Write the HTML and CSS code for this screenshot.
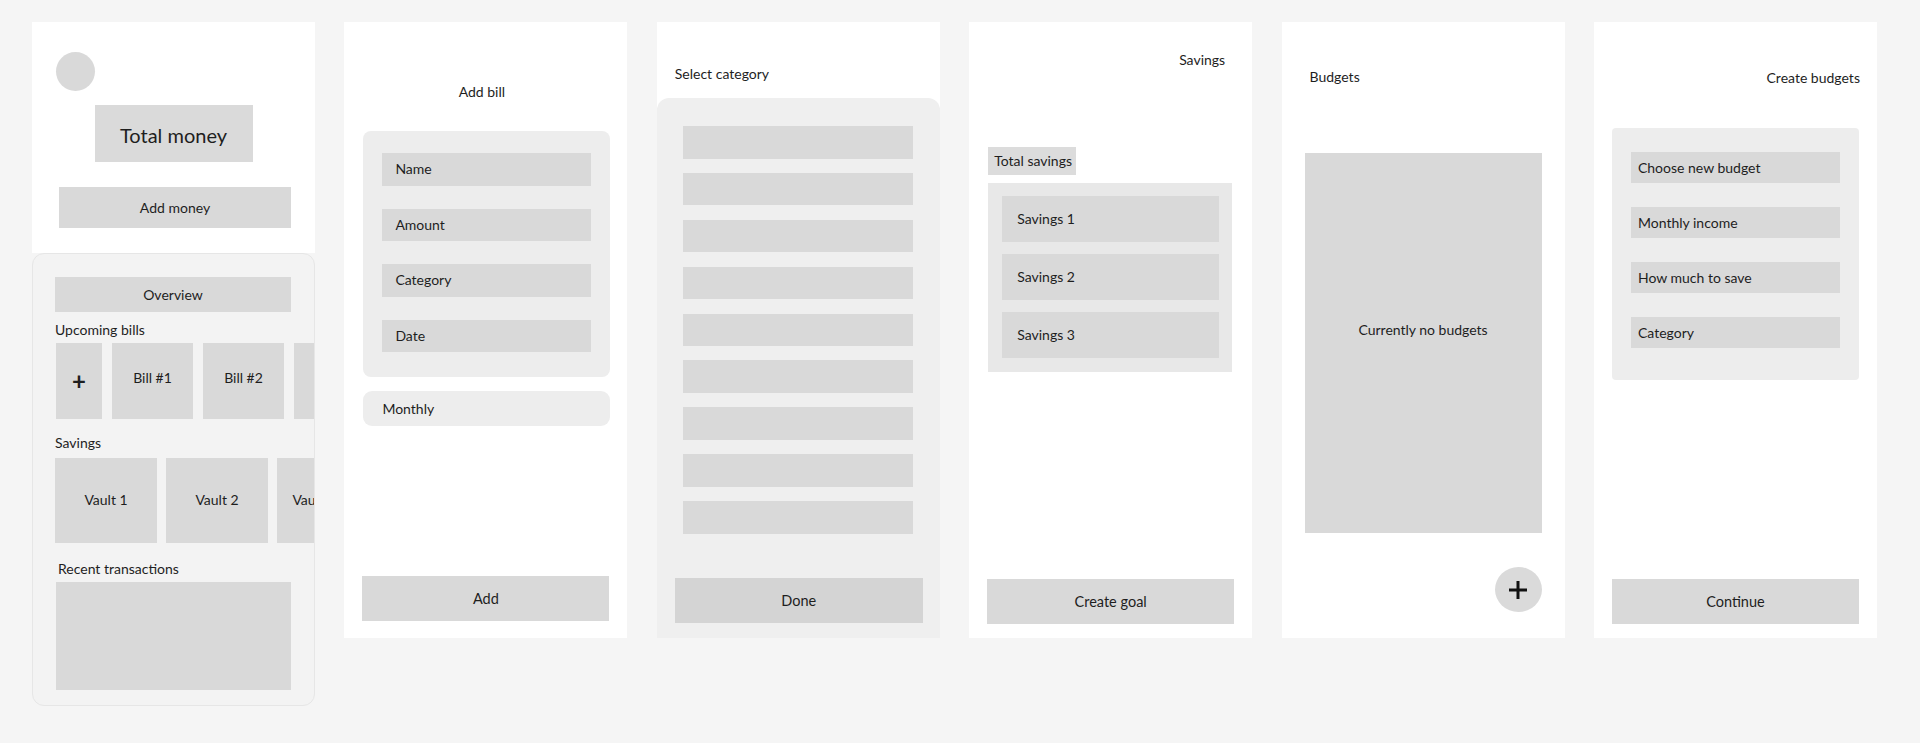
FILE: index.html
```html
<!DOCTYPE html>
<html lang="en">
<head>
<meta charset="utf-8">
<title>Finance app wireframes</title>
<link rel="stylesheet" href="styles.css">
</head>
<body>
<main class="board">

  <!-- Screen 1: Home -->
  <section class="screen home">
    <div class="home-top">
      <div class="avatar"></div>
      <div class="total-money">Total money</div>
      <div class="btn add-money">Add money</div>
    </div>
    <div class="home-sheet">
      <div class="overview">Overview</div>
      <div class="label bills-label">Upcoming bills</div>
      <div class="card-row bills">
        <div class="card bill-add">+</div>
        <div class="card bill">Bill #1</div>
        <div class="card bill">Bill #2</div>
        <div class="card bill"></div>
      </div>
      <div class="label savings-label">Savings</div>
      <div class="card-row vaults">
        <div class="card vault">Vault 1</div>
        <div class="card vault">Vault 2</div>
        <div class="card vault vault-partial">Vault 3</div>
      </div>
      <div class="label recent-label">Recent transactions</div>
      <div class="recent-box"></div>
    </div>
  </section>

  <!-- Screen 2: Add bill -->
  <section class="screen add-bill">
    <div class="title center">Add bill</div>
    <div class="form-box bill-form">
      <div class="field">Name</div>
      <div class="field">Amount</div>
      <div class="field">Category</div>
      <div class="field">Date</div>
    </div>
    <div class="monthly">Monthly</div>
    <div class="btn bottom-btn add-btn">Add</div>
  </section>

  <!-- Screen 3: Select category -->
  <section class="screen select-cat">
    <div class="title cat-title">Select category</div>
    <div class="cat-sheet">
      <div class="cat-list">
        <div class="cat-row"></div>
        <div class="cat-row"></div>
        <div class="cat-row"></div>
        <div class="cat-row"></div>
        <div class="cat-row"></div>
        <div class="cat-row"></div>
        <div class="cat-row"></div>
        <div class="cat-row"></div>
        <div class="cat-row"></div>
      </div>
      <div class="btn done-btn">Done</div>
    </div>
  </section>

  <!-- Screen 4: Savings -->
  <section class="screen savings">
    <div class="title right savings-title">Savings</div>
    <div class="chip">Total savings</div>
    <div class="savings-list">
      <div class="saving-item">Savings 1</div>
      <div class="saving-item">Savings 2</div>
      <div class="saving-item">Savings 3</div>
    </div>
    <div class="btn bottom-btn">Create goal</div>
  </section>

  <!-- Screen 5: Budgets -->
  <section class="screen budgets">
    <div class="title budgets-title">Budgets</div>
    <div class="empty-box">Currently no budgets</div>
    <div class="fab-row">
      <div class="fab">
        <svg width="22" height="22" viewBox="0 0 22 22" aria-hidden="true">
          <path d="M11 2V20M2 11H20" stroke="#111" stroke-width="3" fill="none"/>
        </svg>
      </div>
    </div>
  </section>

  <!-- Screen 6: Create budgets -->
  <section class="screen create-budgets">
    <div class="title right create-title">Create budgets</div>
    <div class="form-box budget-form">
      <div class="field">Choose new budget</div>
      <div class="field">Monthly income</div>
      <div class="field">How much to save</div>
      <div class="field">Category</div>
    </div>
    <div class="btn bottom-btn">Continue</div>
  </section>

</main>
</body>
</html>
```

FILE: styles.css
```css
* {
  box-sizing: border-box;
}

html, body {
  margin: 0;
  padding: 0;
}

body {
  background: #f5f5f5;
  font-family: "Lato", "Liberation Sans", sans-serif;
  color: #1e1e1e;
  font-size: 14px;
  line-height: 16px;
  width: 1920px;
  height: 743px;
  overflow: hidden;
}

.board {
  display: flex;
  align-items: flex-start;
  gap: 29.4px;
  padding: 22px 0 0 32px;
}

.screen {
  width: 283px;
  flex: none;
  background: #ffffff;
  display: flex;
  flex-direction: column;
}

/* ---------- generic ---------- */
.btn {
  background: #d9d9d9;
  display: flex;
  align-items: center;
  justify-content: center;
}

.title {
  height: 16px;
}

.title.center {
  text-align: center;
  padding-right: 8px;
}

.title.right {
  text-align: right;
}

.field {
  background: #d9d9d9;
  display: flex;
  align-items: center;
}

.bottom-btn {
  margin-top: auto;
  height: 45px;
  width: 247px;
  margin-left: 18px;
  margin-bottom: 14px;
  font-size: 14.5px;
}

.add-btn {
  margin-bottom: 17px;
}

/* ---------- screen 1 ---------- */
.home {
  height: 684px;
  background: transparent;
}

.home-top {
  background: #ffffff;
  height: 231px;
  display: flex;
  flex-direction: column;
  align-items: center;
  padding-top: 30px;
}

.avatar {
  width: 39px;
  height: 39px;
  border-radius: 50%;
  background: #d9d9d9;
  align-self: flex-start;
  margin-left: 24px;
}

.total-money {
  margin-top: 14px;
  width: 158px;
  height: 57px;
  background: #dadada;
  display: flex;
  align-items: center;
  justify-content: center;
  font-size: 20px;
  padding-top: 2px;
}

.add-money {
  margin-top: 25px;
  width: 232px;
  height: 41px;
  margin-left: 3px;
}

.home-sheet {
  height: 453px;
  background: #f3f3f3;
  border: 1px solid #e6e6e6;
  border-radius: 12px;
  overflow: hidden;
  padding: 23px 0 0 22px;
  display: flex;
  flex-direction: column;
}

.overview {
  width: 236px;
  height: 35px;
  background: #d9d9d9;
  display: flex;
  align-items: center;
  justify-content: center;
}

.label {
  height: 16px;
}

.bills-label {
  margin-top: 10px;
  margin-bottom: 5px;
}

.card-row {
  display: flex;
  flex-wrap: nowrap;
}

.card {
  flex: none;
  background: #d9d9d9;
  display: flex;
  align-items: center;
  justify-content: center;
}

.bills {
  gap: 10px;
  height: 76px;
}

.bill-add {
  width: 46px;
  margin-left: 1px;
  font-size: 24px;
  font-weight: 700;
}

.bill {
  width: 81px;
  padding-bottom: 6px;
}

.savings-label {
  margin-top: 16px;
  margin-bottom: 7px;
}

.vaults {
  gap: 9px;
  height: 85px;
}

.vault {
  width: 102px;
  padding-bottom: 2px;
}

.vault-partial {
  width: 74px;
  white-space: nowrap;
}

.recent-label {
  margin-top: 18px;
  margin-bottom: 5px;
  padding-left: 3px;
}

.recent-box {
  width: 235px;
  height: 108px;
  margin-left: 1px;
  background: #d9d9d9;
}

/* ---------- screen 2 ---------- */
.add-bill {
  height: 616px;
  padding-top: 62px;
}

.form-box {
  background: #ededed;
  display: flex;
  flex-direction: column;
}

.bill-form {
  margin-top: 31px;
  margin-left: 19px;
  width: 247px;
  height: 246px;
  border-radius: 8px;
  padding: 22px 19px 0 19px;
  gap: 23px;
}

.bill-form .field {
  height: 32.5px;
  padding-left: 13px;
}

.monthly {
  margin-top: 14px;
  margin-left: 19px;
  width: 247px;
  height: 35px;
  border-radius: 9px;
  background: #ededed;
  display: flex;
  align-items: center;
  padding-left: 19px;
}

/* ---------- screen 3 ---------- */
.select-cat {
  height: 616px;
  padding-top: 44px;
}

.cat-title {
  padding-left: 18px;
}

.cat-sheet {
  margin-top: 16px;
  flex: 1;
  background: #efefef;
  border-radius: 12px 12px 0 0;
  display: flex;
  flex-direction: column;
  padding-top: 28px;
}

.cat-list {
  display: flex;
  flex-direction: column;
  gap: 14.4px;
  padding-left: 26px;
}

.cat-row {
  width: 230px;
  height: 32.5px;
  background: #d9d9d9;
}

.done-btn {
  margin-top: auto;
  margin-left: 18px;
  margin-bottom: 15px;
  width: 248px;
  height: 45px;
  background: #d4d4d4;
  font-size: 14.5px;
}

/* ---------- screen 4 ---------- */
.savings {
  height: 616px;
  padding-top: 30px;
}

.savings-title {
  padding-right: 27px;
}

.chip {
  margin-top: 79px;
  margin-left: 19px;
  width: 88px;
  height: 28px;
  background: #dcdcdc;
  display: flex;
  align-items: center;
  padding-left: 6px;
}

.savings-list {
  margin-top: 8px;
  margin-left: 19px;
  width: 244px;
  background: #e8e8e8;
  padding: 13px 13px 14px 14px;
  display: flex;
  flex-direction: column;
  gap: 12px;
}

.saving-item {
  height: 46px;
  background: #d9d9d9;
  display: flex;
  align-items: center;
  padding-left: 15px;
}

/* ---------- screen 5 ---------- */
.budgets {
  height: 616px;
  padding-top: 47px;
}

.budgets-title {
  padding-left: 28px;
}

.empty-box {
  margin-top: 68px;
  margin-left: 23px;
  width: 237px;
  height: 380px;
  background: #d9d9d9;
  display: flex;
  align-items: center;
  justify-content: center;
  padding-bottom: 26px;
}

.fab-row {
  margin-top: 34px;
  display: flex;
  justify-content: flex-end;
  padding-right: 23px;
}

.fab {
  width: 47px;
  height: 45px;
  border-radius: 50%;
  background: #dadada;
  display: flex;
  align-items: center;
  justify-content: center;
}

/* ---------- screen 6 ---------- */
.create-budgets {
  height: 616px;
  padding-top: 48px;
}

.create-title {
  padding-right: 17px;
}

.budget-form {
  margin-top: 42px;
  margin-left: 18px;
  width: 247px;
  height: 252px;
  border-radius: 4px;
  padding: 24px 19px 0 19px;
  gap: 24px;
}

.budget-form .field {
  height: 31px;
  padding-left: 7px;
}
```
